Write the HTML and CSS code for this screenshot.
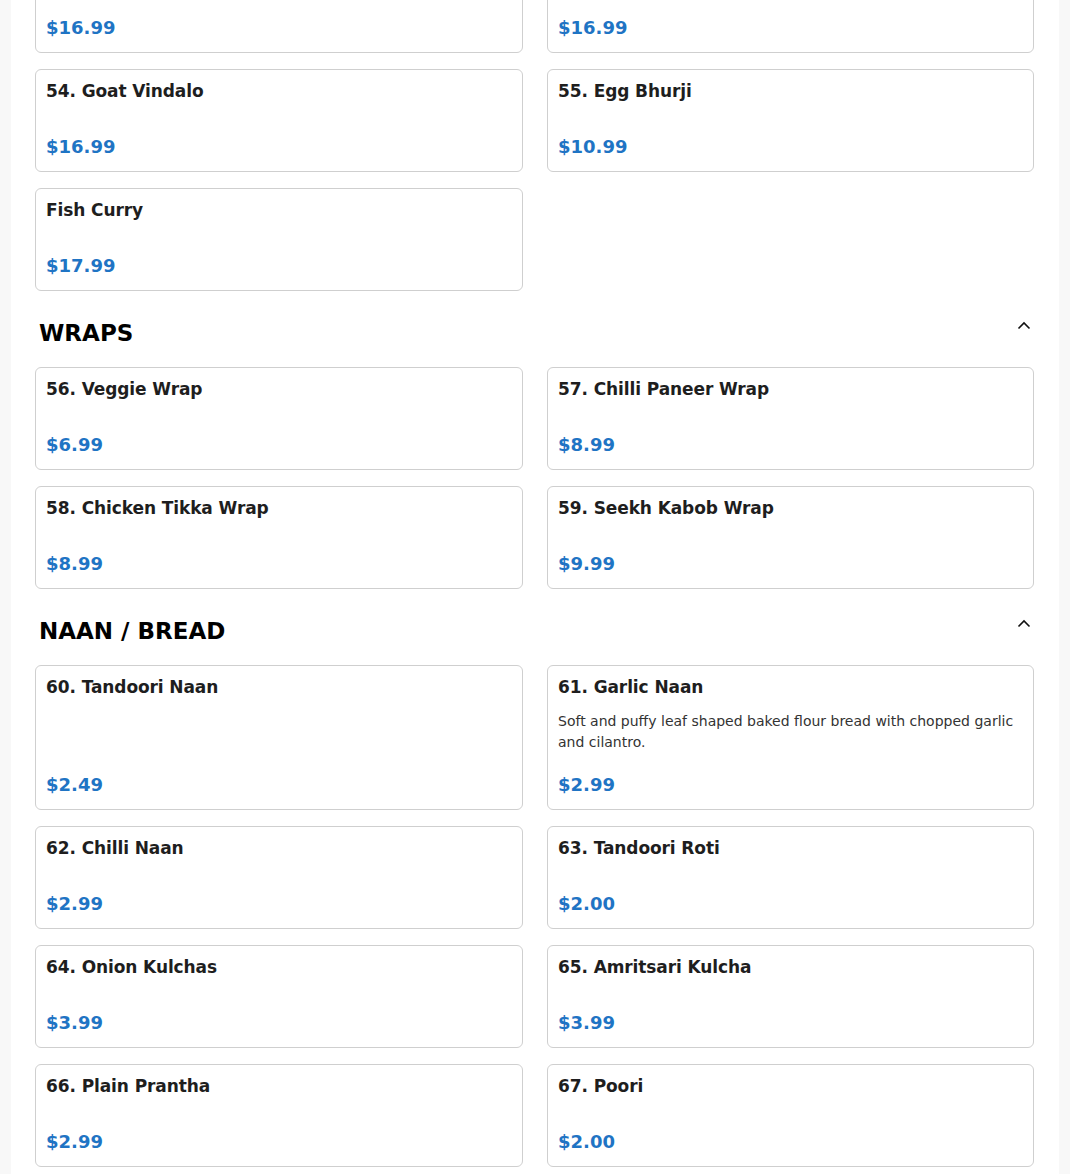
FILE: index.html
```html
<!DOCTYPE html>
<html lang="en">
<head>
<meta charset="utf-8">
<title>Menu</title>
<link rel="stylesheet" href="styles.css">
</head>
<body>
<main class="menu">
  <section class="section">
    <div class="grid">
      <div class="card"><div class="title">52. Goat Curry</div><div class="desc"></div><div class="price">$16.99</div></div>
      <div class="card"><div class="title">53. Goat Saag</div><div class="desc"></div><div class="price">$16.99</div></div>
      <div class="card"><div class="title">54. Goat Vindalo</div><div class="desc"></div><div class="price">$16.99</div></div>
      <div class="card"><div class="title">55. Egg Bhurji</div><div class="desc"></div><div class="price">$10.99</div></div>
      <div class="card"><div class="title">Fish Curry</div><div class="desc"></div><div class="price">$17.99</div></div>
    </div>
  </section>

  <section class="section">
    <div class="section-head">
      <h2 class="section-title">WRAPS</h2>
      <button class="toggle" aria-label="Collapse"><svg width="16" height="16" viewBox="0 0 16 16"><polyline points="2.5,10.5 8,5 13.5,10.5" fill="none" stroke="#111" stroke-width="1.6"/></svg></button>
    </div>
    <div class="grid">
      <div class="card"><div class="title">56. Veggie Wrap</div><div class="desc"></div><div class="price">$6.99</div></div>
      <div class="card"><div class="title">57. Chilli Paneer Wrap</div><div class="desc"></div><div class="price">$8.99</div></div>
      <div class="card"><div class="title">58. Chicken Tikka Wrap</div><div class="desc"></div><div class="price">$8.99</div></div>
      <div class="card"><div class="title">59. Seekh Kabob Wrap</div><div class="desc"></div><div class="price">$9.99</div></div>
    </div>
  </section>

  <section class="section">
    <div class="section-head">
      <h2 class="section-title">NAAN / BREAD</h2>
      <button class="toggle" aria-label="Collapse"><svg width="16" height="16" viewBox="0 0 16 16"><polyline points="2.5,10.5 8,5 13.5,10.5" fill="none" stroke="#111" stroke-width="1.6"/></svg></button>
    </div>
    <div class="grid">
      <div class="card"><div class="title">60. Tandoori Naan</div><div class="desc"></div><div class="price">$2.49</div></div>
      <div class="card"><div class="title">61. Garlic Naan</div><div class="desc">Soft and puffy leaf shaped baked flour bread with chopped garlic and cilantro.</div><div class="price">$2.99</div></div>
      <div class="card"><div class="title">62. Chilli Naan</div><div class="desc"></div><div class="price">$2.99</div></div>
      <div class="card"><div class="title">63. Tandoori Roti</div><div class="desc"></div><div class="price">$2.00</div></div>
      <div class="card"><div class="title">64. Onion Kulchas</div><div class="desc"></div><div class="price">$3.99</div></div>
      <div class="card"><div class="title">65. Amritsari Kulcha</div><div class="desc"></div><div class="price">$3.99</div></div>
      <div class="card"><div class="title">66. Plain Prantha</div><div class="desc"></div><div class="price">$2.99</div></div>
      <div class="card"><div class="title">67. Poori</div><div class="desc"></div><div class="price">$2.00</div></div>
    </div>
  </section>
</main>
</body>
</html>
```

FILE: styles.css
```css
html, body {
  margin: 0;
  padding: 0;
  background: #f8f8f8;
  font-family: "DejaVu Sans", "Liberation Sans", sans-serif;
  color: #1e1e1e;
}

.menu {
  width: 1048px;
  margin: -50px auto 0;
  padding: 0 25px 40px 24px;
  box-sizing: border-box;
  background: #ffffff;
  min-height: 1300px;
}

.grid {
  display: grid;
  grid-template-columns: 488px 487px;
  column-gap: 24px;
  row-gap: 16px;
  align-items: stretch;
}

.card {
  border: 1px solid #cfcfcf;
  border-radius: 6px;
  padding: 11px 10px 13px;
  display: flex;
  flex-direction: column;
  background: #fff;
}

.title {
  font-size: 17px;
  font-weight: bold;
  line-height: 21px;
  letter-spacing: -0.1px;
  color: #1e1e1e;
}

.desc {
  margin-top: 13px;
  font-size: 14px;
  line-height: 21px;
  color: #333;
}

.price {
  margin-top: auto;
  padding-top: 21px;
  font-size: 18px;
  font-weight: bold;
  line-height: 22px;
  color: #1f74c4;
}

.section-head {
  display: flex;
  justify-content: space-between;
  align-items: flex-start;
  padding: 24px 2px 0 4px;
  margin-bottom: 18px;
}

.section-title {
  margin: 0;
  font-size: 23px;
  line-height: 34px;
  font-weight: bold;
  color: #000;
  position: relative;
  top: 1px;
}

.toggle {
  border: 0;
  background: none;
  padding: 3px 0 0;
  margin: 0;
  width: 16px;
  height: 20px;
  cursor: pointer;
}
```
